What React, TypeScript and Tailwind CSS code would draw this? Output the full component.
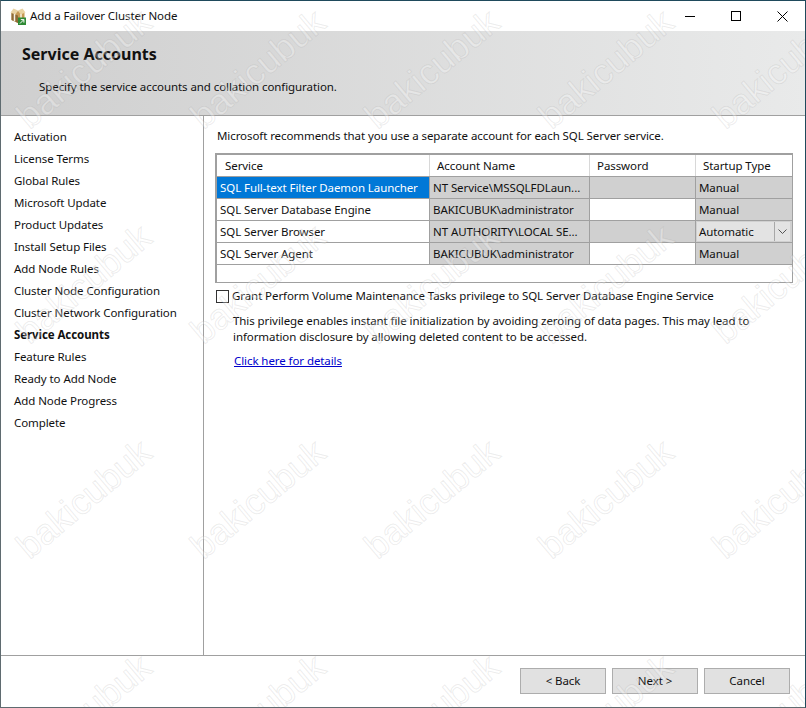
const steps = [
  "Activation",
  "License Terms",
  "Global Rules",
  "Microsoft Update",
  "Product Updates",
  "Install Setup Files",
  "Add Node Rules",
  "Cluster Node Configuration",
  "Cluster Network Configuration",
  "Service Accounts",
  "Feature Rules",
  "Ready to Add Node",
  "Add Node Progress",
  "Complete",
];

const rows = [
  { service: "SQL Full-text Filter Daemon Launcher", account: "NT Service\\MSSQLFDLaun...", pwdOff: true, startup: "Manual", selected: true },
  { service: "SQL Server Database Engine", account: "BAKICUBUK\\administrator", pwdOff: false, startup: "Manual" },
  { service: "SQL Server Browser", account: "NT AUTHORITY\\LOCAL SE...", pwdOff: true, startup: "Automatic", combo: true },
  { service: "SQL Server Agent", account: "BAKICUBUK\\administrator", pwdOff: false, startup: "Manual" },
];

// watermark tiles repeat across the whole screenshot, these are the tile centres
const marks: { x: number; y: number }[] = [];
for (const y of [69, 284, 499, 714]) {
  for (const x of [84, 258, 432, 606, 780]) {
    marks.push({ x, y });
  }
}

function PackageIcon() {
  return (
    <svg width="17" height="17" viewBox="0 0 17 17" className="shrink-0">
      <path d="M1.5 5 L8 3 L14.5 5 L14.5 12 L8 15 L1.5 12 Z" fill="#c79a55" />
      <path d="M1.5 5 L8 7.5 L8 15 L1.5 12 Z" fill="#8f6a35" />
      <path d="M0.5 4.5 L3.5 0.5 L8 2.5 L5.5 6.5 Z M15.5 4.5 L12.5 0.5 L8 2.5 L10.5 6.5 Z" fill="#e9d3a2" />
      <path d="M4.5 6 L4.5 13.5 M11 6 L11 13" stroke="#f6f2e4" strokeWidth="1.5" />
      <rect x="8" y="9.5" width="8" height="7.5" fill="#2f8a35" />
      <path d="M10 15.5 L13.7 11.8 M10.8 11.6 L13.9 11.6 L13.9 14.6" stroke="#fff" strokeWidth="1" fill="none" />
    </svg>
  );
}

export default function App() {
  return (
    <div className="relative w-[806px] h-[708px] overflow-hidden bg-white text-[11.5px] tracking-[-0.08px] text-[#111] font-['Noto_Sans',sans-serif] border border-[#5f6b70] border-t-[#1f4a5c] border-r-[#1f4a5c] flex flex-col">
      <div className="h-[30px] flex items-center shrink-0 bg-white">
        <div className="pl-[9px] pr-[3px] flex"><PackageIcon /></div>
        <span>Add a Failover Cluster Node</span>
        <div className="ml-auto flex items-center text-black">
          <div className="w-[46px] h-[30px] flex items-center justify-center">
            <div className="w-[10px] h-px bg-black" />
          </div>
          <div className="w-[46px] h-[30px] flex items-center justify-center">
            <div className="w-[10px] h-[10px] border border-black" />
          </div>
          <div className="w-[46px] h-[30px] flex items-center justify-center">
            <svg width="11" height="11" viewBox="0 0 11 11">
              <path d="M0.5 0.5 L10.5 10.5 M10.5 0.5 L0.5 10.5" stroke="#000" strokeWidth="1" />
            </svg>
          </div>
        </div>
      </div>

      <div className="h-[85px] shrink-0 border-b border-[#a0a0a0] bg-gradient-to-r from-[#cfcfcf] to-[#e9eaea] pl-[21px] pt-[12px]">
        <h1 className="text-[16px] tracking-normal leading-[22px] font-bold">Service Accounts</h1>
        <p className="pl-[17px] mt-[13px] leading-[18px]">Specify the service accounts and collation configuration.</p>
      </div>

      <div className="flex-1 flex min-h-0">
        <div className="w-[203px] shrink-0 border-r border-[#a0a0a0] pl-[13px] pt-[10px]">
          {steps.map((s) => (
            <div key={s} className={`h-[22px] leading-[22px] ${s === "Service Accounts" ? "font-bold" : ""}`}>
              {s}
            </div>
          ))}
        </div>

        <div className="flex-1 pl-[11px] pr-[12px] pt-[11px]">
          <p className="pl-[2px] leading-[18px] mb-[8px]">Microsoft recommends that you use a separate account for each SQL Server service.</p>

          <div className="w-[578px] h-[130px] border-2 border-[#a0a0a0] border-b border-r bg-white">
            <div className="flex h-[22px] border-b border-[#a0a0a0] leading-[21px]">
              <div className="w-[213px] pl-[8px] border-r border-[#d8d8d8]">Service</div>
              <div className="w-[160px] pl-[7px] border-r border-[#d8d8d8]">Account Name</div>
              <div className="w-[106px] pl-[7px] border-r border-[#d8d8d8]">Password</div>
              <div className="flex-1 pl-[7px]">Startup Type</div>
            </div>
            {rows.map((r) => (
              <div key={r.service} className="flex h-[22px] border-b border-[#a0a0a0] leading-[21px] whitespace-nowrap">
                <div className={`w-[213px] pl-[3px] border-r border-[#a0a0a0] overflow-hidden ${r.selected ? "bg-[#0078d7] text-white" : ""}`}>{r.service}</div>
                <div className="w-[160px] pl-[3px] border-r border-[#a0a0a0] bg-[#d0d0d0] overflow-hidden">{r.account}</div>
                <div className={`w-[106px] border-r border-[#a0a0a0] ${r.pwdOff ? "bg-[#d0d0d0]" : "bg-white"}`} />
                {r.combo ? (
                  <div className="flex-1 bg-[#d0d0d0] pl-px pr-[2px] py-px flex">
                    <div className="flex-1 bg-[#e3e3e3] pl-[2px] leading-[19px]">{r.startup}</div>
                    <div className="w-[16px] bg-[#e3e3e3] border-l border-[#a8a8a8] flex items-center justify-center">
                      <svg width="9" height="6" viewBox="0 0 9 6">
                        <path d="M0.5 0.5 L4.5 4.5 L8.5 0.5" stroke="#555" strokeWidth="1" fill="none" />
                      </svg>
                    </div>
                  </div>
                ) : (
                  <div className="flex-1 pl-[3px] bg-[#d0d0d0]">{r.startup}</div>
                )}
              </div>
            ))}
          </div>

          <label className="flex items-center mt-[4px] h-[18px]">
            <span className="w-[13px] h-[13px] ml-px border border-[#333] bg-white mr-[3px] shrink-0" />
            <span>Grant Perform Volume Maintenance Tasks privilege to SQL Server Database Engine Service</span>
          </label>

          <p className="pl-[18px] mt-[8px] leading-[16px]">
            This privilege enables instant file initialization by avoiding zeroing of data pages. This may lead to
            <br />
            information disclosure by allowing deleted content to be accessed.
          </p>

          <a className="block ml-[19px] mt-[7px] leading-[18px] text-[#0000cc] underline">Click here for details</a>
        </div>
      </div>

      <div className="h-[52px] shrink-0 border-t border-[#a0a0a0] flex justify-end items-start pt-[12px] pr-[15px] gap-[6px]">
        <button className="w-[86px] h-[26px] bg-[#e1e1e1] border border-[#adadad]">&lt; Back</button>
        <button className="w-[86px] h-[26px] bg-[#e1e1e1] border border-[#adadad]">Next &gt;</button>
        <button className="w-[86px] h-[26px] bg-[#e1e1e1] border border-[#adadad]">Cancel</button>
      </div>

      <div className="absolute -inset-px pointer-events-none overflow-hidden">
        {marks.map((m) => (
          <span
            key={`${m.x}-${m.y}`}
            className="absolute block -translate-x-1/2 -translate-y-1/2 -rotate-[40deg] text-[36px] leading-none tracking-normal font-['Liberation_Sans',sans-serif] text-white/30 [-webkit-text-stroke:1px_rgba(140,140,140,0.16)]"
            style={{ left: m.x, top: m.y }}
          >
            bakicubuk
          </span>
        ))}
      </div>
    </div>
  );
}
